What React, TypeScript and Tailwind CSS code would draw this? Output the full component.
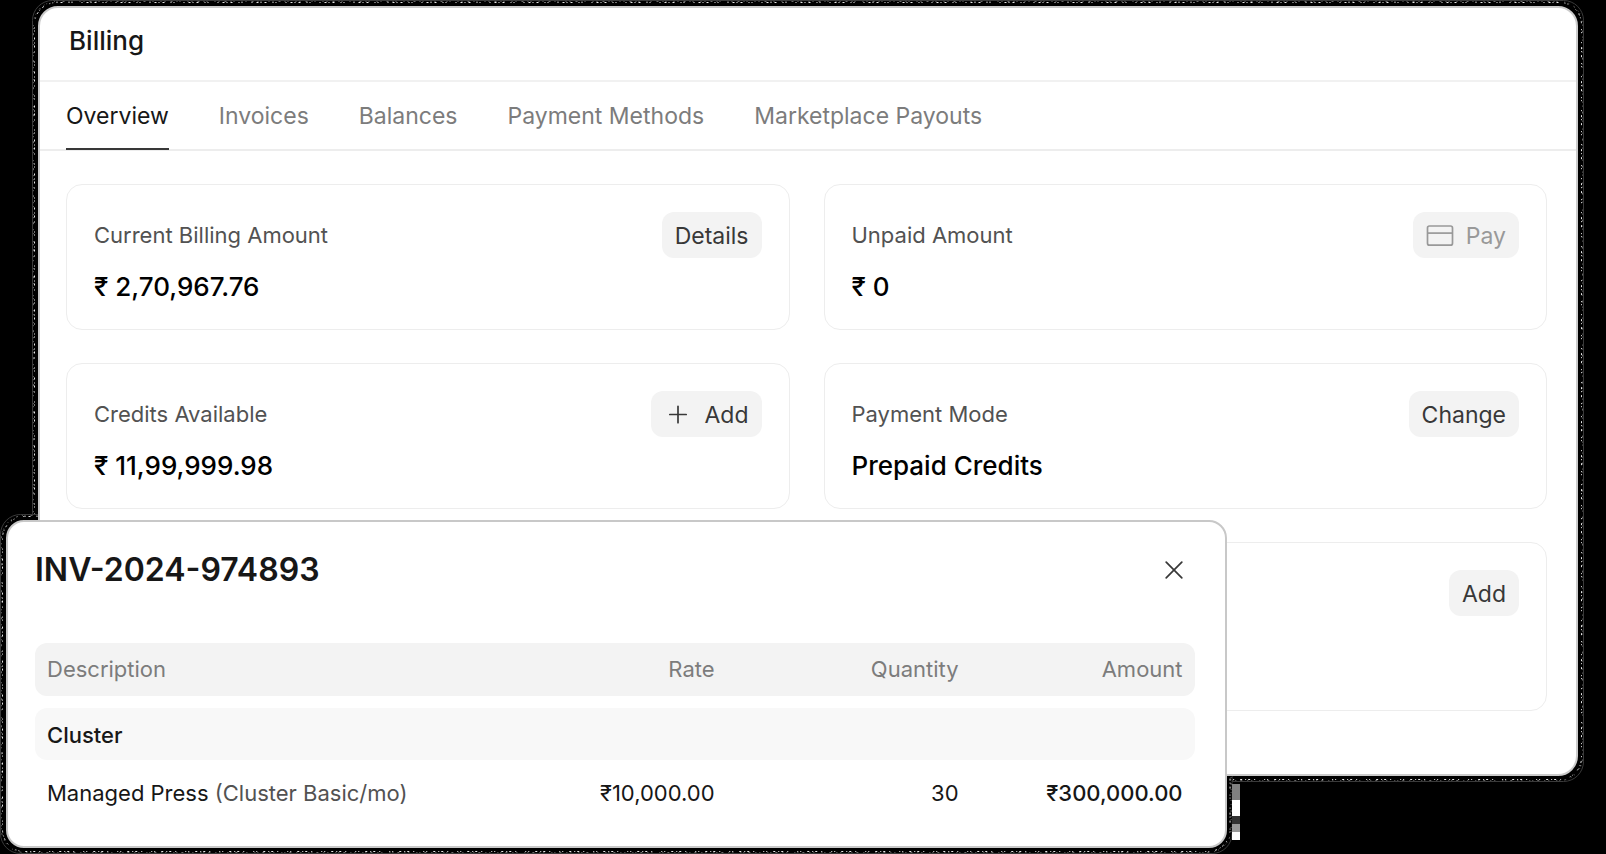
import React from "react";

type CardProps = {
  label: string;
  value: string;
  action: React.ReactNode;
  actionDisabled?: boolean;
  tall?: boolean;
};

const tabs = ["Overview", "Invoices", "Balances", "Payment Methods", "Marketplace Payouts"];

function CardIcon() {
  return (
    <svg viewBox="0 0 28 24" className="h-6 w-7" fill="none" stroke="currentColor" strokeWidth="1.7" aria-hidden="true">
      <rect x="1.5" y="2" width="25" height="19.2" rx="2" />
      <path d="M1.5 9.1h25" />
    </svg>
  );
}

function PlusIcon() {
  return (
    <svg viewBox="0 0 28 24" className="h-6 w-7" fill="none" stroke="currentColor" strokeWidth="1.7" strokeLinecap="round" aria-hidden="true">
      <path d="M14 3.3v16.4M5.8 11.5h16.4" />
    </svg>
  );
}

function CloseIcon() {
  return (
    <svg viewBox="0 0 18 18" className="size-[18px]" fill="none" stroke="currentColor" strokeWidth="1.7" strokeLinecap="round" aria-hidden="true">
      <path d="M1.2 1.2l15.6 15.6M16.8 1.2L1.2 16.8" />
    </svg>
  );
}

function SpeckledEdge() {
  return (
    <svg className="pointer-events-none absolute -inset-1.5 -z-10 h-[calc(100%+12px)] w-[calc(100%+12px)]" fill="none" aria-hidden="true">
      <rect x="0.5" y="0.5" width="calc(100% - 1px)" height="calc(100% - 1px)" rx="20" stroke="#3a3a3a" />
      <rect x="1" y="1" width="calc(100% - 2px)" height="calc(100% - 2px)" rx="23" fill="#000" />
      <rect x="2.5" y="2.5" width="calc(100% - 5px)" height="calc(100% - 5px)" rx="22" stroke="#fff" strokeOpacity="0.9" strokeDasharray="1 3 2 6 1 2 1 9 1 4 2 2" />
      <rect x="1.5" y="1.5" width="calc(100% - 3px)" height="calc(100% - 3px)" rx="23" stroke="#fff" strokeOpacity="0.4" strokeDasharray="1 5 2 4 1 2 1 7 1 3" />
    </svg>
  );
}

function SummaryCard({ label, value, action, actionDisabled, tall }: CardProps) {
  return (
    <article className={`rounded-2xl border border-[#ededed] px-[27px] pt-[27px] ${tall ? "h-[169px]" : "h-[146px]"}`}>
      <div className="flex items-center justify-between">
        <h2 className="text-[22px] leading-[46px] text-[#525252]">{label}</h2>
        <button
          type="button"
          disabled={actionDisabled}
          className={`flex h-[46px] items-center gap-3 rounded-xl bg-[#f3f3f3] px-[13px] pt-0.5 text-[23px] ${actionDisabled ? "text-[#999999]" : "text-[#383838]"}`}
        >
          {action}
        </button>
      </div>
      <p className="mt-[13px] text-[26px] leading-8 font-medium text-black">{value}</p>
    </article>
  );
}

export default function App() {
  return (
    <div className="relative isolate min-h-screen bg-black pt-1.5 pr-7 pb-[78px] pl-[38px] font-['Inter',sans-serif] text-[#171717]">
      <main className="relative">
        <SpeckledEdge />
        <div className="relative rounded-[20px] border-2 border-[#cbcbcb] bg-white pb-[63px]">
          <header className="flex h-[74px] items-start border-b-2 border-[#f1f1f1] px-[29px] pt-[15px]">
            <h1 className="text-[26px] leading-9 font-medium">Billing</h1>
          </header>
          <nav className="flex h-[69px] gap-[50px] border-b-2 border-[#ededed] px-[26px]">
            {tabs.map((tab, i) => (
              <a
                key={tab}
                href="#"
                className={`flex h-[68px] items-center border-b-2 pt-0.5 text-[23px] ${i === 0 ? "border-[#383838] text-[#171717]" : "border-transparent text-[#7c7c7c]"}`}
              >
                {tab}
              </a>
            ))}
          </nav>
          <section className="grid grid-cols-2 gap-x-[34px] gap-y-[33px] pt-[33px] pr-[29px] pl-[26px]">
            <SummaryCard label="Current Billing Amount" value="₹ 2,70,967.76" action="Details" />
            <SummaryCard label="Unpaid Amount" value="₹ 0" action={<><CardIcon />Pay</>} actionDisabled />
            <SummaryCard label="Credits Available" value="₹ 11,99,999.98" action={<><PlusIcon />Add</>} />
            <SummaryCard label="Payment Mode" value="Prepaid Credits" action="Change" />
            <div />
            <SummaryCard label="" value="" action="Add" tall />
          </section>
        </div>
      </main>

      <div role="dialog" aria-labelledby="invoice-title" className="absolute top-[520px] left-1.5 w-[76%]">
        <SpeckledEdge />
        <div className="absolute top-[264px] left-full ml-[5px] flex w-2 flex-col" aria-hidden="true">
          <span className="h-4 bg-[#808080]" />
          <span className="h-4 bg-white" />
          <span className="h-2 bg-[#333333]" />
          <span className="h-2 bg-[#999999]" />
          <span className="h-2 bg-white" />
        </div>
        <div className="relative rounded-[18px] border-2 border-[#c8c8c8] bg-white pt-6 pr-[30px] pb-[22px] pl-[27px]">
          <div className="flex h-[47px] items-center justify-between pr-3">
            <h2 id="invoice-title" className="text-[32px] font-semibold">INV-2024-974893</h2>
            <button type="button" aria-label="Close" className="text-[#383838]">
              <CloseIcon />
            </button>
          </div>
          <table className="mt-[50px] w-full table-fixed text-right text-[22px]">
            <colgroup>
              <col />
              <col className="w-[240px]" />
              <col className="w-[244px]" />
              <col className="w-[224px]" />
            </colgroup>
            <thead className="text-[#7c7c7c]">
              <tr className="h-[53px] bg-[#f3f3f3]">
                <th className="rounded-l-xl px-3 text-left font-normal">Description</th>
                <th className="px-3 font-normal">Rate</th>
                <th className="px-3 font-normal">Quantity</th>
                <th className="rounded-r-xl px-3 font-normal">Amount</th>
              </tr>
            </thead>
            <tbody>
              <tr aria-hidden="true" className="h-3">
                <td colSpan={4} />
              </tr>
              <tr className="h-[52px] bg-[#f8f8f8]">
                <th colSpan={4} className="rounded-xl px-3 pt-0.5 text-left font-medium">Cluster</th>
              </tr>
              <tr className="h-16">
                <td className="px-3 pt-0.5 text-left">
                  Managed Press <span className="text-[#525252]">(Cluster Basic/mo)</span>
                </td>
                <td className="px-3 pt-0.5">₹10,000.00</td>
                <td className="px-3 pt-0.5">30</td>
                <td className="px-3 pt-0.5 font-medium">₹300,000.00</td>
              </tr>
            </tbody>
          </table>
        </div>
      </div>
    </div>
  );
}
